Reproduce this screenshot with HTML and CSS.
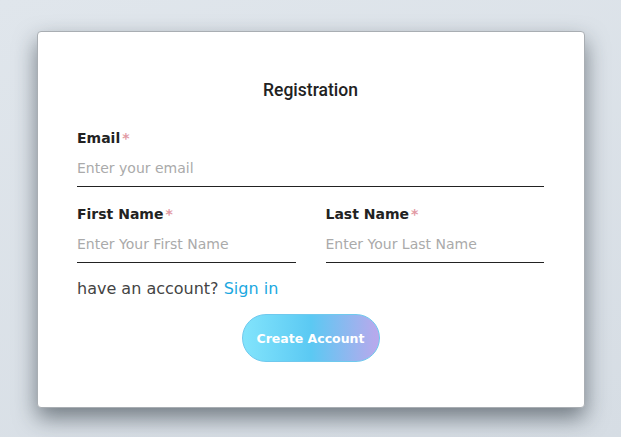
FILE: index.html
```html
<!DOCTYPE html>
<html>
<head>
<meta charset="utf-8">
<link rel="stylesheet" href="styles.css">
</head>
<body>
<div class="card">
  <h1 class="title">Registration</h1>
  <div class="field">
    <label class="label">Email<span class="req">*</span></label>
    <input class="input" type="text" placeholder="Enter your email">
  </div>
  <div class="row">
    <div class="field">
      <label class="label">First Name<span class="req">*</span></label>
      <input class="input" type="text" placeholder="Enter Your First Name">
    </div>
    <div class="field">
      <label class="label">Last Name<span class="req">*</span></label>
      <input class="input" type="text" placeholder="Enter Your Last Name">
    </div>
  </div>
  <p class="signin">have an account? <a href="#" class="link">Sign in</a></p>
  <div class="actions">
    <button class="btn">Create Account</button>
  </div>
</div>
</body>
</html>
```
FILE: styles.css
```css
html, body { margin: 0; padding: 0; }
body {
  width: 621px;
  height: 437px;
  background: linear-gradient(160deg, #e0e6ec 0%, #d6dde4 100%);
  font-family: "DejaVu Sans", sans-serif;
  padding-top: 31px;
  padding-left: 37px;
  box-sizing: border-box;
  overflow: hidden;
}
.card {
  width: 548px;
  height: 377px;
  box-sizing: border-box;
  background: #fff;
  border: 1px solid #a9aeb3;
  border-radius: 4px;
  box-shadow: 0 10px 22px rgba(30, 40, 50, 0.55);
  padding: 48px 40px 0 39px;
}
.title {
  margin: 0;
  text-align: center;
  font-family: Roboto, sans-serif;
  font-weight: 500;
  font-size: 17.5px;
  line-height: 20px;
  color: #222;
}
.field {
  display: flex;
  flex-direction: column;
  margin-top: 29px;
}
.row {
  display: grid;
  grid-template-columns: 1fr 1fr;
  column-gap: 30px;
}
.row .field { margin-top: 18px; }
.label {
  font-weight: bold;
  font-size: 14px;
  line-height: 18px;
  color: #222;
}
.req {
  color: #e29aa4;
  margin-left: 2px;
}
.input {
  border: none;
  border-bottom: 1px solid #222;
  height: 36px;
  padding: 0;
  margin-top: 3px;
  font-family: "DejaVu Sans", sans-serif;
  font-size: 14px;
  outline: none;
  background: transparent;
  color: #222;
}
.input::placeholder { color: #aaa; }
.signin {
  margin: 16px 0 0;
  font-size: 16px;
  line-height: 20px;
  color: #444;
}
.link { color: #1ba8df; text-decoration: none; }
.actions {
  display: flex;
  justify-content: center;
  margin-top: 15px;
}
.btn {
  width: 138px;
  height: 48px;
  border-radius: 24px;
  border: 1px solid #6fc9ee;
  background: linear-gradient(90deg, #82e4fc 0%, #5bc9f3 50%, #bba8ec 100%);
  color: #fff;
  font-family: "DejaVu Sans", sans-serif;
  font-weight: bold;
  font-size: 12.5px;
  padding: 0;
}
```
